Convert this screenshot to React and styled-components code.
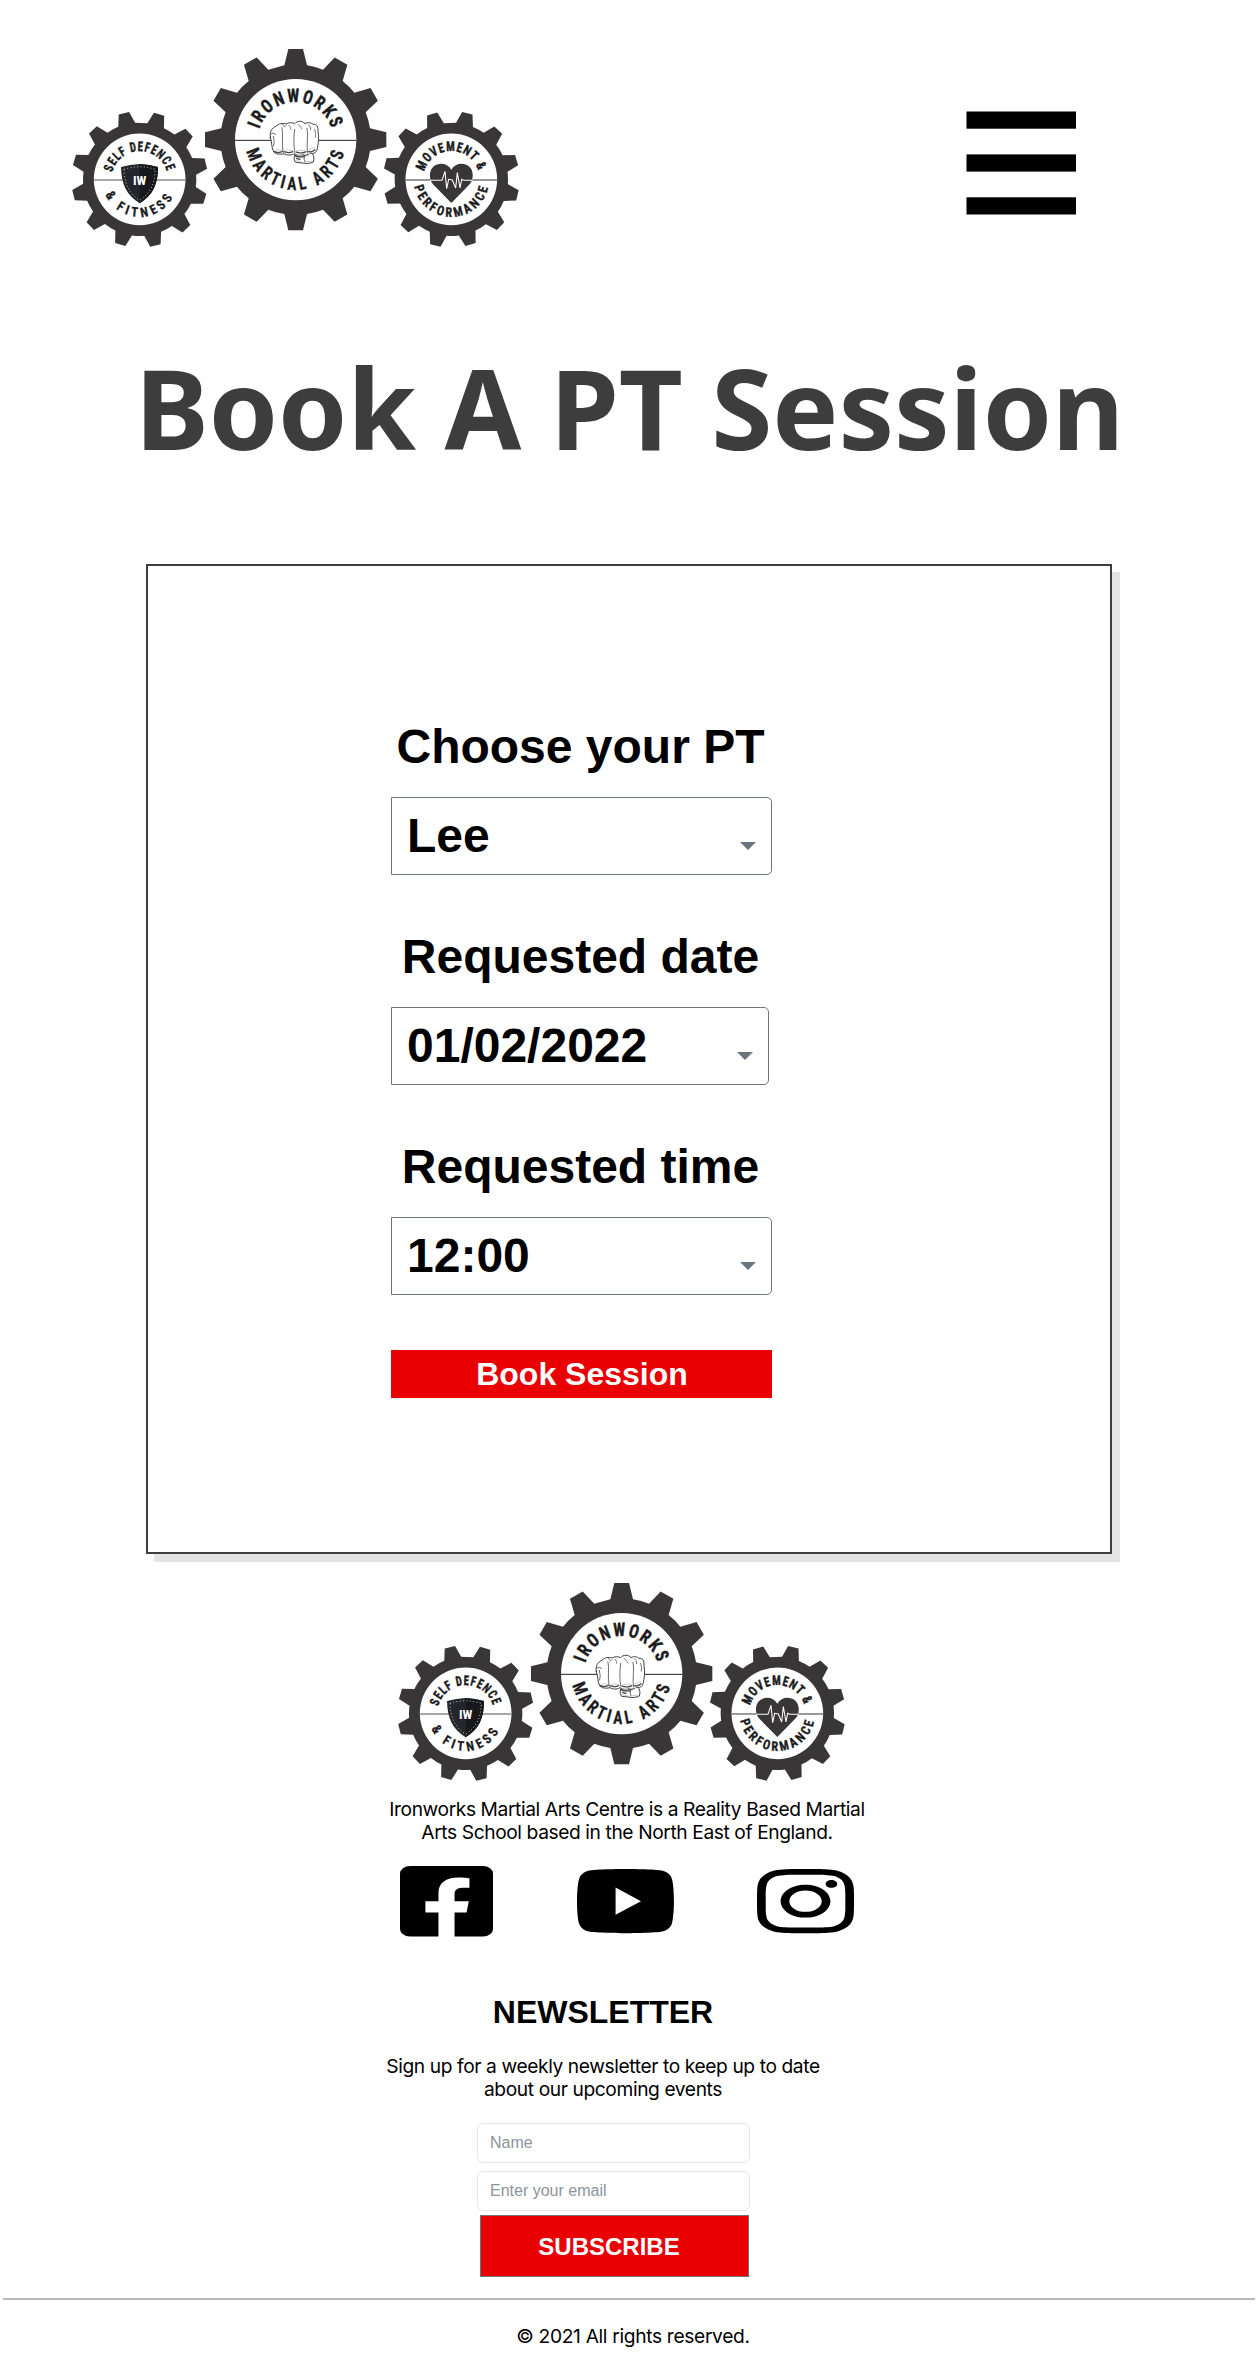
import React from 'react';
import styled, { createGlobalStyle } from 'styled-components';

const sans = '"Liberation Sans", Arial, sans-serif';
const body = 'Inter, sans-serif';
const ink = '#383637';

const GlobalStyle = createGlobalStyle`
  *, *::before, *::after { box-sizing: border-box; }
  body { margin: 0; background: #fff; color: #000; font-family: ${sans}; }
  h1, h2, p { margin: 0; }
`;

const Page = styled.div`
  width: 1258px;
  height: 2372px;
  overflow: hidden;
  display: flex;
  flex-direction: column;
`;

const Header = styled.header`
  display: flex;
  justify-content: space-between;
  align-items: flex-start;
  height: 249px;
  padding: 45px 181px 0 69px;
`;

const LogoSvg = styled.svg`
  display: block;
  width: 464px;
  height: 204px;
  background: #fefefe;
  flex: none;
`;

const ArcText = styled.text`
  font-family: "Liberation Sans Narrow", "Roboto Condensed", "Liberation Sans", sans-serif;
  font-weight: 700;
  fill: ${(p) => p.$color || '#1c1c1e'};
  stroke: ${(p) => p.$color || '#1c1c1e'};
  stroke-width: ${(p) => p.$bold || 0};
`;

const MenuButton = styled.button`
  margin-top: 65px;
  padding: 0;
  border: 0;
  background: none;
  width: 111px;
  height: 106px;
  svg { display: block; }
`;

const Title = styled.h1`
  margin-top: 82px;
  padding-left: 1px;
  text-align: center;
  font: 700 111px/152px "Noto Sans", sans-serif;
  letter-spacing: -0.15px;
  color: #3d3d3d;
  white-space: nowrap;
`;

const Card = styled.main`
  width: 966px;
  height: 990px;
  flex: none;
  margin: 81px 0 0 146px;
  padding: 153px 0 0 243px;
  border: 2px solid #3e3e3e;
  background: #fff;
  box-shadow: 8px 8px 0 #e4e4e4;
`;

const BookingForm = styled.form`
  width: 381px;
  display: flex;
  flex-direction: column;
`;

const Field = styled.div`
  display: flex;
  flex-direction: column;
  margin-bottom: 54px;
`;

const Label = styled.label`
  height: 55px;
  padding-right: 2px;
  font: 700 48px/56px ${sans};
  text-align: center;
  white-space: nowrap;
`;

const SelectBox = styled.button`
  display: flex;
  align-items: center;
  justify-content: space-between;
  width: ${(p) => p.$width}px;
  height: 78px;
  margin-top: 23px;
  padding: 0 15px;
  border: 1px solid #6c757d;
  border-radius: 0 5px 5px 0;
  background: #fff;
  color: #000;
  font: 700 48px/56px ${sans};
`;

const Caret = styled.span`
  width: 0;
  height: 0;
  margin-top: 20px;
  border: 8px solid transparent;
  border-top-color: #6c757d;
  border-bottom: 0;
`;

const BookButton = styled.button`
  height: 48px;
  margin-top: 1px;
  padding: 0 0 0 1px;
  border: 0;
  background: #e90003;
  color: #fff;
  font: 700 32px/48px ${sans};
`;

const Footer = styled.footer`
  display: flex;
  flex-direction: column;
`;

const Brand = styled.section`
  width: 500px;
  margin: 25px 0 0 377px;
  display: flex;
  flex-direction: column;
  align-items: center;
`;

const Copy = styled.p`
  font: 400 19.2px/23px ${body};
  letter-spacing: ${(p) => p.$track}px;
  text-align: center;
  white-space: nowrap;
`;

const BrandCopy = styled(Copy)`
  margin-top: 15px;
`;

const Socials = styled.nav`
  display: flex;
  align-items: center;
  justify-content: space-between;
  width: 454px;
  height: 71px;
  margin-top: 22px;
  svg { display: block; }
`;

const Newsletter = styled.section`
  width: 500px;
  margin: 57px 0 0 353px;
`;

const NewsTitle = styled.h2`
  font: 700 32px/36px ${sans};
  text-align: center;
  margin-bottom: 25px;
`;

const SignUp = styled.form`
  display: flex;
  flex-direction: column;
  gap: 8px;
  width: 273px;
  margin: 22px 0 0 124px;
`;

const Input = styled.input`
  width: 273px;
  height: 40px;
  padding: 0 12px;
  border: 1px solid #e4e5e6;
  border-radius: 6px;
  background: #fff;
  font: 400 16px/20px ${sans};
  &::placeholder { color: #8d949b; opacity: 1; }
`;

const Subscribe = styled.button`
  width: 269px;
  height: 62px;
  margin: -4px 0 0 3px;
  padding: 1px 11px 0 0;
  border: 1px solid #6c757d;
  background: #e90003;
  color: #fff;
  font: 700 24px/59px ${sans};
`;

const Rule = styled.hr`
  width: 1252px;
  height: 2px;
  margin: 21px 3px 0;
  border: 0;
  background: #b8b8b8;
`;

const Copyright = styled(Copy)`
  width: 300px;
  margin: 25px 0 0 483px;
`;

function gearPath(cx, cy, tip, root, tipHalf, baseHalf, offset) {
  const parts = [];
  for (let i = 0; i < 12; i += 1) {
    const a = ((offset + i * 30) * Math.PI) / 180;
    const at = (x, y) =>
      `${(cx + x * Math.cos(a) + y * Math.sin(a)).toFixed(1)} ${(cy + x * Math.sin(a) - y * Math.cos(a)).toFixed(1)}`;
    const join = i === 0 ? `M${at(-baseHalf, root)}` : `A${root} ${root} 0 0 1 ${at(-baseHalf, root)}`;
    parts.push(`${join}L${at(-tipHalf, tip)}L${at(tipHalf, tip)}L${at(baseHalf, root)}`);
  }
  return `${parts.join('')}Z`;
}

function Gear({ cx, cy, tip, root, hole, tipHalf, baseHalf, offset, line, lineWidth }) {
  return (
    <>
      <path d={gearPath(cx, cy, tip, root, tipHalf, baseHalf, offset)} fill={ink} />
      <circle cx={cx} cy={cy} r={hole} fill="#fff" />
      <path d={`M${cx - hole} ${cy + 2}H${cx + hole}`} stroke={line} strokeWidth={lineWidth} />
    </>
  );
}

function Arc({ id, cx, cy, r, from, to, below, size, track = 0.22, bold, children }) {
  const s = (from * Math.PI) / 180;
  const e = (to * Math.PI) / 180;
  const dir = below ? 1 : -1;
  const d = `M${cx + r * Math.sin(s)} ${cy + dir * r * Math.cos(s)}A${r} ${r} 0 0 ${below ? 0 : 1} ${cx + r * Math.sin(e)} ${cy + dir * r * Math.cos(e)}`;
  return (
    <>
      <path id={id} d={d} fill="none" />
      <ArcText fontSize={size} letterSpacing={size * track} $bold={bold}>
        <textPath href={`#${id}`} textLength={r * (e - s)} lengthAdjust="spacingAndGlyphs">
          {children}
        </textPath>
      </ArcText>
    </>
  );
}

function Fist() {
  return (
    <g transform="translate(420 30)" fill="none" stroke="#222" strokeWidth="2.6" strokeLinecap="round" strokeLinejoin="round">
      <path fill="#fff" d="M211 292C208 277 215 264 228 259C236 250 248 249 259 252C265 247 278 247 284 251C291 242 307 241 315 251C325 245 334 249 339 253C351 252 355 260 354 275C358 296 354 315 352 326C350 336 343 342 333 340C326 347 315 346 309 343C299 349 287 345 282 341C271 348 260 345 252 341C241 344 224 343 220 333C214 321 216 306 211 292Z" />
      <path fill="#fff" d="M284 346C281 354 282 362 287 367L307 369C320 372 332 370 340 366C343 358 342 347 338 342M284 346C296 350 311 349 325 344" />
      <path d="M246 263C251 285 243 315 250 338M284 268C281 290 280 318 285 339M321 265C326 287 318 316 323 340M213 282Q221 276 227 283M220 289Q225 304 221 318M314 349Q309 358 315 366" strokeWidth="2" />
      <path d="M248 253Q252 266 258 257M267 256Q273 262 273 268M294 253Q302 259 306 267M326 254Q334 260 332 269M344 268Q349 279 346 292" strokeWidth="1.8" />
      <path d="M224 334Q235 341 247 334M254 335Q267 341 280 334M289 336Q303 342 318 335M326 335Q336 337 345 329M288 350L312 351M290 356L300 358" stroke="#444" strokeWidth="4" strokeDasharray="2 2.6" />
      <path d="M229 329L246 331M257 330L278 331M292 331L316 331M328 329L345 322M287 362L305 365M318 365L335 364" stroke="#888" strokeWidth="1.5" strokeDasharray="2 3" />
    </g>
  );
}

function Logo({ id }) {
  return (
    <LogoSvg viewBox="27 45 1392 612" role="img">
      <Gear cx={707} cy={329} tip={272} root={223} hole={182} tipHalf={22} baseHalf={34} offset={0} line="#222" lineWidth={3} />
      <Gear cx={239} cy={448} tip={204} root={168} hole={137.5} tipHalf={16} baseHalf={26} offset={16.6} line="#8a8a8a" lineWidth={4} />
      <Gear cx={1174} cy={448} tip={204} root={168} hole={137.5} tipHalf={16} baseHalf={26} offset={13.6} line="#777" lineWidth={4} />

      <Arc id={`${id}-a`} cx={707} cy={329} r={113} from={-74} to={75} size={56} track={0.12} bold={1.2}>IRONWORKS</Arc>
      <Arc id={`${id}-b`} cx={707} cy={329} r={151} from={-77} to={79} size={55} bold={0.8} below>MARTIAL ARTS</Arc>
      <Arc id={`${id}-c`} cx={239} cy={448} r={85} from={-76} to={75} size={40} track={0.09} bold={1.2}>SELF DEFENCE</Arc>
      <Arc id={`${id}-d`} cx={239} cy={448} r={113} from={-66} to={67} size={40} track={0.3} bold={0.8} below>&amp; FITNESS</Arc>
      <Arc id={`${id}-e`} cx={1174} cy={448} r={85} from={-74} to={74} size={40} track={0.09} bold={1.2}>MOVEMENT &amp;</Arc>
      <Arc id={`${id}-f`} cx={1174} cy={448} r={113} from={-79} to={81} size={40} bold={1} below>PERFORMANCE</Arc>

      <Fist />

      <path d="M183 411Q211 403 239 402Q267 403 294 411C294 462 279 495 239 520C199 495 184 462 183 411Z" fill="#25262b" />
      <path d="M239 402Q267 403 294 411C294 462 279 495 239 520Z" fill="#17181b" />
      <path d="M192 418Q215 411 239 410Q263 411 286 418C285 460 272 489 239 511C206 489 193 460 192 418Z" fill="none" stroke="#ddd" strokeWidth="2.6" strokeDasharray="3 7" />
      <ArcText x="219" y="466" fontSize="40" textLength="40" lengthAdjust="spacingAndGlyphs" $color="#fff">IW</ArcText>

      <path d="M1174 519L1119 463C1106 448 1107 421 1120 410C1137 396 1162 399 1174 419C1186 399 1211 396 1228 410C1241 421 1242 448 1229 463Z" fill={ink} />
      <path d="M1110 451H1146L1155 424L1160 476L1166 448L1177 450L1187 474L1192 428L1200 474L1205 448L1211 451H1238" fill="none" stroke="#fff" strokeWidth="3.2" />
    </LogoSvg>
  );
}

const Stretched = ({ w, h, box, d }) => (
  <svg width={w} height={h} viewBox={box} preserveAspectRatio="none">
    <path d={d} />
  </svg>
);

const facebook = 'M400 32H48A48 48 0 0 0 0 80v352a48 48 0 0 0 48 48h137.25V327.69h-63V256h63v-54.64c0-62.15 37-96.48 93.67-96.48 27.14 0 55.52 4.84 55.52 4.84v61h-31.27c-30.81 0-40.42 19.12-40.42 38.73V256h68.78l-11 71.69h-57.78V480H400a48 48 0 0 0 48-48V80a48 48 0 0 0-48-48z';
const youtube = 'M549.655 124.083c-6.281-23.65-24.787-42.276-48.284-48.597C458.781 64 288 64 288 64S117.22 64 74.629 75.486c-23.497 6.322-42.003 24.947-48.284 48.597-11.412 42.867-11.412 132.305-11.412 132.305s0 89.438 11.412 132.305c6.281 23.65 24.787 41.5 48.284 47.821C117.22 448 288 448 288 448s170.78 0 213.371-11.486c23.497-6.321 42.003-24.171 48.284-47.821 11.412-42.867 11.412-132.305 11.412-132.305s0-89.438-11.412-132.305zm-317.51 213.508V175.185l142.739 81.205-142.739 81.201z';
const instagram = 'M224.1 141c-63.6 0-114.9 51.3-114.9 114.9s51.3 114.9 114.9 114.9S339 319.5 339 255.9 287.7 141 224.1 141zm0 189.6c-41.1 0-74.7-33.5-74.7-74.7s33.5-74.7 74.7-74.7 74.7 33.5 74.7 74.7-33.6 74.7-74.7 74.7zm146.4-194.3c0 14.9-12 26.8-26.8 26.8-14.9 0-26.8-12-26.8-26.8s12-26.8 26.8-26.8 26.8 12 26.8 26.8zm76.1 27.2c-1.7-35.9-9.9-67.7-36.2-93.9-26.2-26.2-58-34.4-93.9-36.2-37-2.1-147.9-2.1-184.9 0-35.8 1.7-67.6 9.9-93.9 36.1s-34.4 58-36.2 93.9c-2.1 37-2.1 147.9 0 184.9 1.7 35.9 9.9 67.7 36.2 93.9s58 34.4 93.9 36.2c37 2.1 147.9 2.1 184.9 0 35.9-1.7 67.7-9.9 93.9-36.2 26.2-26.2 34.4-58 36.2-93.9 2.1-37 2.1-147.8 0-184.8zM398.8 388c-7.8 19.6-22.9 34.7-42.6 42.6-29.5 11.7-99.5 9-132.1 9s-102.7 2.6-132.1-9c-19.6-7.8-34.7-22.9-42.6-42.6-11.7-29.5-9-99.5-9-132.1s-2.6-102.7 9-132.1c7.8-19.6 22.9-34.7 42.6-42.6 29.5-11.7 99.5-9 132.1-9s102.7-2.6 132.1 9c19.6 7.8 34.7 22.9 42.6 42.6 11.7 29.5 9 99.5 9 132.1s2.7 102.7-9 132.1z';

const fields = [
  { label: 'Choose your PT', value: 'Lee', width: 381 },
  { label: 'Requested date', value: '01/02/2022', width: 378 },
  { label: 'Requested time', value: '12:00', width: 381 },
];

export default function App() {
  return (
    <Page>
      <GlobalStyle />
      <Header>
        <Logo id="top" />
        <MenuButton type="button" aria-label="Menu">
          <svg width="111" height="106" viewBox="0 0 111 106">
            <rect x="0.5" y="1.5" width="109.5" height="17.2" />
            <rect x="0.5" y="44.4" width="109.5" height="17.2" />
            <rect x="0.5" y="87.3" width="109.5" height="17.2" />
          </svg>
        </MenuButton>
      </Header>
      <Title>Book A PT Session</Title>
      <Card>
        <BookingForm>
          {fields.map((f) => (
            <Field key={f.label}>
              <Label>{f.label}</Label>
              <SelectBox type="button" $width={f.width}>
                {f.value}
                <Caret />
              </SelectBox>
            </Field>
          ))}
          <BookButton type="button">Book Session</BookButton>
        </BookingForm>
      </Card>
      <Footer>
        <Brand>
          <Logo id="bottom" />
          <BrandCopy $track={-0.4}>
            Ironworks Martial Arts Centre is a Reality Based Martial
            <br />
            Arts School based in the North East of England.
          </BrandCopy>
          <Socials>
            <Stretched w={93} h={70.5} box="0 32 448 448" d={facebook} />
            <Stretched w={97} h={64.3} box="14.9 64 546.2 384" d={youtube} />
            <Stretched w={97} h={64.3} box="0 32 448 448" d={instagram} />
          </Socials>
        </Brand>
        <Newsletter>
          <NewsTitle>NEWSLETTER</NewsTitle>
          <Copy $track={-0.4}>
            Sign up for a weekly newsletter to keep up to date
            <br />
            about our upcoming events
          </Copy>
          <SignUp>
            <Input placeholder="Name" />
            <Input placeholder="Enter your email" />
            <Subscribe type="button">SUBSCRIBE</Subscribe>
          </SignUp>
        </Newsletter>
        <Rule />
        <Copyright $track={-0.33}>© 2021 All rights reserved.</Copyright>
      </Footer>
    </Page>
  );
}
